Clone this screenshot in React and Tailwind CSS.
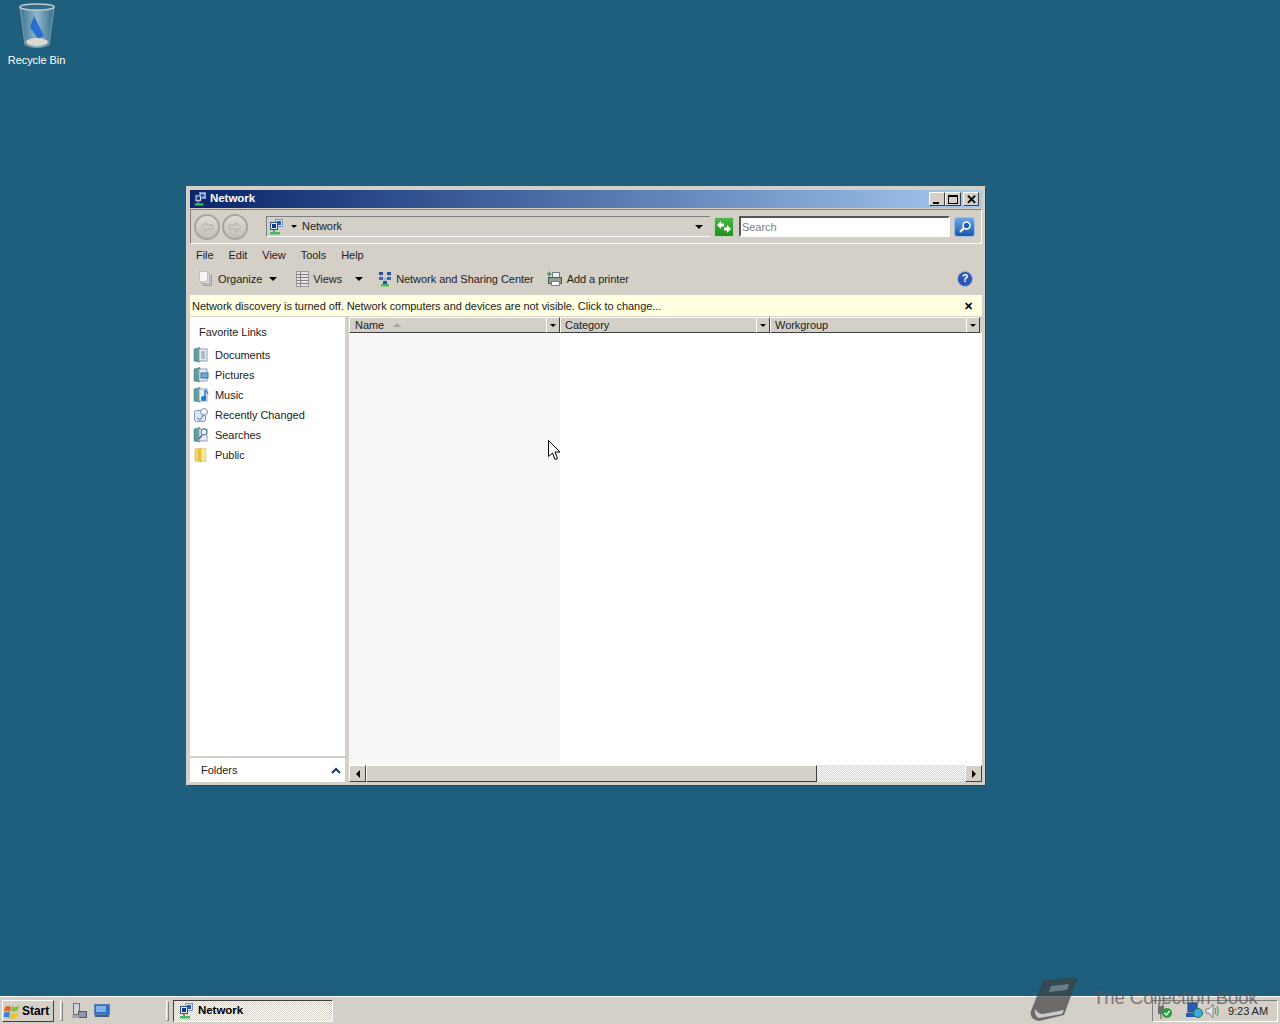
import React from 'react';

const raised = 'border border-t-white border-l-white border-r-[#404040] border-b-[#404040]';

const NetworkIcon = ({ size = 16 }) => (
  <svg width={size} height={size} viewBox="0 0 16 16" className="shrink-0">
    <rect x="7.500" y="0.500" width="7" height="7" fill="#dbe6f5" stroke="#7f95bd" />
    <rect x="9" y="2" width="4" height="4" fill="#2a5bb8" />
    <rect x="2.500" y="3.500" width="7" height="7" fill="#e8eef8" stroke="#34518a" />
    <rect x="4" y="5" width="4" height="4" fill="#123a94" />
    <rect x="5" y="11" width="2" height="2" fill="#6f8fb8" />
    <rect x="2" y="13" width="10" height="2.500" fill="#3fbf55" />
  </svg>
);

const SharingIcon = () => (
  <svg width="16" height="16" viewBox="0 0 16 16" className="shrink-0">
    <rect x="2" y="1" width="4" height="3" fill="#2a4fb0" />
    <rect x="10" y="1" width="4" height="3" fill="#2a4fb0" />
    <rect x="2" y="6" width="4" height="3" fill="#3568c4" />
    <rect x="10" y="6" width="4" height="3" fill="#3568c4" />
    <path d="M4 4v2M12 4v2M6 7.500h4M8 8v3" stroke="#9aa8b8" />
    <rect x="6" y="10" width="4" height="3" fill="#2a4fb0" />
    <rect x="4" y="13" width="8" height="2.500" fill="#3fbf55" />
  </svg>
);

const PrinterIcon = () => (
  <svg width="16" height="16" viewBox="0 0 16 16" className="shrink-0">
    <rect x="5.500" y="1.500" width="7" height="5" fill="#f2f2ec" stroke="#708090" />
    <rect x="1.500" y="6.500" width="13" height="6" fill="#8fa398" stroke="#46584f" />
    <rect x="4.500" y="10.500" width="8" height="4" fill="#fff" stroke="#708090" />
    <path d="M0 3h4.500M2.200 .800v4.500" stroke="#2fa344" strokeWidth="1.500" />
  </svg>
);

const OrganizeIcon = () => (
  <svg width="16" height="16" viewBox="0 0 16 16" className="shrink-0">
    <rect x="5.500" y="4.500" width="8" height="10" fill="#c2c2c2" stroke="#a0a0a0" />
    <rect x="3.500" y="2.500" width="8" height="10" fill="#dedede" stroke="#b0b0b0" />
    <rect x="1.500" y="0.500" width="8" height="10" fill="#f4f4f4" stroke="#c0c0c0" />
  </svg>
);

const ViewsIcon = () => (
  <svg width="16" height="16" viewBox="0 0 16 16" className="shrink-0">
    <rect x="1.500" y="0.500" width="12" height="15" fill="#e4e4e0" stroke="#9a9a9a" />
    <path d="M5.500 1v14M1.500 3.500h12M1.500 6.500h12M1.500 9.500h12M1.500 12.500h12" stroke="#808080" />
  </svg>
);

const FolderBase = ({ children }) => (
  <svg width="16" height="16" viewBox="0 0 16 16" className="shrink-0">
    <path d="M1 2l6-1.500V15l-6-1z" fill="#5f9c9c" stroke="#3f6f80" strokeWidth="0.500" />
    <rect x="6" y="2" width="8" height="12" fill="#e4ecf2" stroke="#8fa3b5" />
    {children}
  </svg>
);

const LinkIcon = ({ type }) => {
  if (type === 'documents')
    return (
      <FolderBase>
        <path d="M8 5h4M8 7h4M8 9h4M8 11h4" stroke="#7a8a9a" />
      </FolderBase>
    );
  if (type === 'pictures')
    return (
      <FolderBase>
        <rect x="8" y="6" width="7" height="5" fill="#6fa8dc" stroke="#3d6d9c" />
      </FolderBase>
    );
  if (type === 'music')
    return (
      <FolderBase>
        <path d="M12 3v8" stroke="#1c78c8" strokeWidth="1.500" />
        <circle cx="10.500" cy="11.500" r="2.500" fill="#1c78c8" />
        <path d="M12 3q3 1 3 4" stroke="#1c78c8" fill="none" />
      </FolderBase>
    );
  if (type === 'recent')
    return (
      <svg width="16" height="16" viewBox="0 0 16 16" className="shrink-0">
        <rect x="1.500" y="3.500" width="11" height="11" rx="2" fill="#dbe6f4" stroke="#7d97bd" />
        <circle cx="11" cy="5" r="3.500" fill="#eef4fb" stroke="#7d97bd" />
        <path d="M4 11l3 2 4-6" stroke="#6c8fbe" fill="none" strokeWidth="1.200" />
      </svg>
    );
  if (type === 'searches')
    return (
      <FolderBase>
        <circle cx="11" cy="5" r="3" fill="#eaf3fb" stroke="#4c6f92" />
        <path d="M9 8l-3 4" stroke="#4c6f92" strokeWidth="1.500" />
      </FolderBase>
    );
  return (
    <svg width="16" height="16" viewBox="0 0 16 16" className="shrink-0">
      <path d="M2 2l6-1v14l-6-1z" fill="#f3d565" stroke="#c9a338" strokeWidth="0.500" />
      <path d="M8 1.500h5v13H8z" fill="#f8e9a0" stroke="#cfae4a" strokeWidth="0.500" />
      <path d="M5 3l3-1v12l-3-1z" fill="#e6bd3c" />
    </svg>
  );
};

const Caret = ({ className = '' }) => (
  <span className={`inline-block w-0 h-0 border-x-[4px] border-x-transparent border-t-[4px] border-t-black ${className}`} />
);

const SmallCaret = ({ className = '' }) => (
  <span className={`inline-block w-0 h-0 border-x-[3px] border-x-transparent border-t-[3px] border-t-black ${className}`} />
);

const links = [
  ['Documents', 'documents'],
  ['Pictures', 'pictures'],
  ['Music', 'music'],
  ['Recently Changed', 'recent'],
  ['Searches', 'searches'],
  ['Public', 'public'],
];

const NavButton = ({ dir }) => (
  <div className="w-[26px] h-[26px] rounded-full border-2 border-[#a8a59e] bg-gradient-to-b from-[#e0ddd6] to-[#c2bfb8] flex items-center justify-center">
    <svg width="14" height="12" viewBox="0 0 14 12">
      <path d={dir === 'left' ? 'M1 6l5-5v3h7v4H6v3z' : 'M13 6L8 1v3H1v4h7v3z'} fill="#cfccc5" stroke="#b4b1a9" />
    </svg>
  </div>
);

const CaptionButton = ({ children }) => (
  <div className={`w-[16px] h-[14px] bg-[#d4d0c8] ${raised} flex items-center justify-center`}>{children}</div>
);

const Column = ({ label, sort, width }) => (
  <div className={`flex h-full ${width}`}>
    <div className={`flex-1 flex items-center pl-[5px] ${raised} border-r-0`}>
      <span className={sort ? '' : '-ml-px'}>{label}</span>
      {sort && (
        <span className="ml-[9px] w-0 h-0 border-x-[4px] border-x-transparent border-b-[4px] border-b-[#a8a59e]" />
      )}
    </div>
    <div className={`w-[14px] flex items-center justify-center ${raised}`}>
      <SmallCaret />
    </div>
  </div>
);

export default function App() {
  return (
    <div
      className="relative w-[1280px] h-[1024px] overflow-hidden bg-[#1e5f7d] flex flex-col text-[11px] tracking-[-0.05px] text-[#222]"
      style={{ fontFamily: '"Liberation Sans", Arial, sans-serif' }}
    >
      <div className="relative flex-1">
        {/* recycle bin */}
        <div className="absolute left-0 top-0 w-[73px] flex flex-col items-center text-white">
          <svg width="40" height="48" viewBox="0 0 40 48" className="mt-[2px]">
            <defs>
              <linearGradient id="bin" x1="0" x2="1">
                <stop offset="0" stopColor="#3f7590" />
                <stop offset="0.5" stopColor="#8fb6ca" />
                <stop offset="1" stopColor="#36708c" />
              </linearGradient>
            </defs>
            <path d="M3 5l5 38q12 5 24 0l5-38z" fill="url(#bin)" stroke="#7e9fb0" />
            <ellipse cx="20" cy="5" rx="17" ry="3" fill="#2f6a88" stroke="#c0c8cc" strokeWidth="1.500" />
            <path d="M17 14l10 20-6 3-8-12z" fill="#2a6fd0" />
            <ellipse cx="20" cy="40" rx="11" ry="4" fill="#ddd8d0" />
          </svg>
          <span className="mt-[3px] leading-[14px]">Recycle Bin</span>
        </div>

        {/* window */}
        <div className="absolute left-[186px] top-[186px] w-[800px] h-[600px] bg-[#d4d0c8] border border-t-[#d4d0c8] border-l-[#d4d0c8] border-r-[#404040] border-b-[#404040] p-[3px] flex flex-col">
          <div className="h-[18px] shrink-0 flex items-center px-[3px] bg-gradient-to-r from-[#0a246a] to-[#a6caf0]">
            <NetworkIcon size={14} />
            <span className="ml-[3px] text-white font-bold text-[11.5px]">Network</span>
            <div className="ml-auto flex items-center">
              <CaptionButton>
                <span className="w-[6px] h-[2px] bg-black mt-[7px] -ml-[2px]" />
              </CaptionButton>
              <CaptionButton>
                <span className="w-[10px] h-[9px] border border-black border-t-2" />
              </CaptionButton>
              <div className="ml-[2px]">
                <CaptionButton>
                  <span className="text-[13px] leading-none font-bold text-black">✕</span>
                </CaptionButton>
              </div>
            </div>
          </div>

          {/* address bar */}
          <div className="h-[35px] shrink-0 mt-px border border-[#808080] border-r-white border-b-white flex items-center pl-[3px] pr-[4px]">
            <div className="flex gap-[2px]">
              <NavButton dir="left" />
              <NavButton dir="right" />
            </div>
            <div className="ml-[18px] w-[444px] h-[21px] border-t border-l border-[#808080] border-b border-b-white flex items-center pl-[1px] pr-[7px]">
              <NetworkIcon />
              <SmallCaret className="ml-[7px]" />
              <span className="ml-[5px]">Network</span>
              <Caret className="ml-auto" />
            </div>
            <div className="ml-[4px] w-[20px] h-[20px] rounded-[2px] bg-gradient-to-b from-[#48b848] to-[#1c8f1c] border border-[#b8d8b8] flex items-center justify-center">
              <svg width="16" height="14" viewBox="0 0 16 14">
                <path d="M1 5l4-4v2.500h3v3H5V9zM15 9l-4-4v2.500H8v3h3V13z" fill="#fff" />
              </svg>
            </div>
            <div className="ml-[5px] w-[211px] h-[21px] bg-white border-2 border-[#555] border-r-white border-b-white flex items-center pl-[1px] pt-[2px] text-[#808080]">
              Search
            </div>
            <div className="ml-[4px] w-[21px] h-[20px] rounded-[3px] bg-gradient-to-b from-[#6aa8e8] to-[#1a57b0] border border-[#9cc0e8] flex items-center justify-center">
              <svg width="14" height="14" viewBox="0 0 14 14">
                <circle cx="8.500" cy="5.500" r="3.500" fill="#1f5cb8" stroke="#fff" strokeWidth="1.500" />
                <path d="M6 8l-4 4" stroke="#fff" strokeWidth="2" />
              </svg>
            </div>
          </div>

          {/* menu */}
          <div className="h-[22px] shrink-0 flex items-center pl-[6px] gap-[15px]">
            {['File', 'Edit', 'View', 'Tools', 'Help'].map((m) => (
              <span key={m}>{m}</span>
            ))}
          </div>

          {/* toolbar */}
          <div className="h-[25px] mb-[4px] shrink-0 flex items-center pl-[8px] pr-[9px]">
            <OrganizeIcon />
            <span className="ml-[4px] mt-px">Organize</span>
            <Caret className="ml-[7px]" />
            <span className="ml-[18px]">
              <ViewsIcon />
            </span>
            <span className="ml-[2px] mt-px">Views</span>
            <Caret className="ml-[13px]" />
            <span className="ml-[14px]">
              <SharingIcon />
            </span>
            <span className="ml-[3px] mt-px">Network and Sharing Center</span>
            <span className="ml-[13px]">
              <PrinterIcon />
            </span>
            <span className="ml-[4px] mt-px">Add a printer</span>
            <div className="ml-auto w-[16px] h-[16px] rounded-full bg-[#2f55b0] border border-[#9fb3dd] text-white text-[11px] font-bold flex items-center justify-center">
              ?
            </div>
          </div>

          {/* info bar */}
          <div className="h-[21px] shrink-0 bg-[#ffffe1] flex items-center pl-[2px] pr-[9px] pt-px">
            <span>Network discovery is turned off. Network computers and devices are not visible. Click to change...</span>
            <span className="ml-auto text-[11px] leading-none font-bold text-black">✕</span>
          </div>

          {/* body */}
          <div className="flex-1 min-h-0 flex mt-px">
            <div className="w-[155px] shrink-0 bg-white flex flex-col">
              <div className="pl-[9px] h-[28px] pt-[2px] flex items-center">Favorite Links</div>
              <div className="flex flex-col pl-[3px]">
                {links.map(([label, type]) => (
                  <div key={label} className="h-[20px] flex items-center gap-[6px]">
                    <LinkIcon type={type} />
                    <span>{label}</span>
                  </div>
                ))}
              </div>
              <div className="mt-auto h-[26px] border-t-2 border-[#d4d0c8] flex items-center pl-[11px] pr-[4px]">
                <span>Folders</span>
                <svg width="10" height="7" viewBox="0 0 10 7" className="ml-auto">
                  <path d="M1 6l4-4 4 4" fill="none" stroke="#17376e" strokeWidth="2" />
                </svg>
              </div>
            </div>
            <div className="w-[4px] shrink-0" />
            <div className="flex-1 min-w-0 flex flex-col bg-white">
              <div className="h-[16px] shrink-0 flex bg-[#d4d0c8]">
                <Column label="Name" sort width="w-[211px]" />
                <Column label="Category" width="w-[210px]" />
                <Column label="Workgroup" width="w-[210px]" />
              </div>
              <div className="flex-1 min-h-0">
                <div className="w-[211px] h-full bg-[#f7f7f7]" />
              </div>
              <div className="h-[17px] shrink-0 flex bg-[repeating-conic-gradient(#d4d0c8_0_25%,#fff_0_50%)] bg-[length:2px_2px]">
                <div className={`w-[17px] bg-[#d4d0c8] ${raised} flex items-center justify-center`}>
                  <span className="w-0 h-0 border-y-[4px] border-y-transparent border-r-[4px] border-r-black" />
                </div>
                <div className={`w-[451px] bg-[#d4d0c8] ${raised}`} />
                <div className={`ml-auto w-[17px] bg-[#d4d0c8] ${raised} flex items-center justify-center`}>
                  <span className="w-0 h-0 border-y-[4px] border-y-transparent border-l-[4px] border-l-black" />
                </div>
              </div>
            </div>
          </div>
        </div>

        {/* mouse pointer */}
        <svg width="13" height="21" viewBox="0 0 13 21" className="absolute left-[548px] top-[440px]">
          <path d="M.5.500v16l4-3.500 2.500 6.500 2.500-1-2.500-6.500h5z" fill="#fff" stroke="#000" />
        </svg>
      </div>

      {/* taskbar */}
      <div className="h-[28px] shrink-0 bg-[#d4d0c8] border-t border-white flex items-center pl-[2px] pr-[2px]">
        <div className={`w-[52px] h-[22px] ${raised} flex items-center pl-[1px] pt-px font-bold text-[12px] text-black`}>
          <svg width="17" height="17" viewBox="0 0 17 17" className="shrink-0">
            <path d="M1 4q3-2 6 0l-1 5q-3-2-6 0z" fill="#e8632a" />
            <path d="M8 3q3 2 7-.5l-1 5q-4 2-7 .5z" fill="#8abf3a" />
            <path d="M0 10q3-2 6 0l-1 5q-3-2-6 0z" fill="#2f87d8" />
            <path d="M7 10q3 1.500 7-.5l-1 5q-4 2-7 .5z" fill="#f2c21f" />
          </svg>
          <span className="ml-[1px]">Start</span>
        </div>
        <div className="ml-[6px] w-[3px] h-[20px] border border-[#808080] border-l-white border-t-white" />
        <svg width="16" height="16" viewBox="0 0 16 16" className="ml-[8px] shrink-0">
          <rect x="2.500" y="0.500" width="6" height="11" fill="#d0d4d8" stroke="#6a7078" />
          <rect x="7.500" y="8.500" width="8" height="6" fill="#8a9aa8" stroke="#556" />
          <rect x="1" y="12" width="7" height="3" fill="#a0a8b0" />
        </svg>
        <svg width="16" height="14" viewBox="0 0 16 14" className="ml-[7px] shrink-0">
          <rect x="0.500" y="0.500" width="15" height="10" fill="#2f6fd0" stroke="#5a7fb0" />
          <rect x="2" y="2" width="10" height="6" fill="#7fb0ea" />
          <rect x="1" y="11" width="14" height="2" fill="#4a5a78" />
        </svg>
        <div className="ml-[56px] w-[3px] h-[20px] border border-[#808080] border-l-white border-t-white" />
        <div className="ml-[4px] w-[160px] h-[22px] border border-t-[#404040] border-l-[#404040] border-r-white border-b-white bg-[repeating-conic-gradient(#d4d0c8_0_25%,#fff_0_50%)] bg-[length:2px_2px] flex items-center pl-[4px] pt-px font-bold text-black text-[11.5px]">
          <NetworkIcon />
          <span className="ml-[4px]">Network</span>
        </div>
        <div className="ml-auto w-[126px] h-[22px] border border-[#808080] border-r-white border-b-white flex items-center pl-[3px] pr-[9px]">
          <svg width="18" height="16" viewBox="0 0 18 16" className="shrink-0">
            <rect x="2" y="3" width="6" height="8" fill="#707070" />
            <path d="M3 0v3M7 0v3M5 11v5" stroke="#555" />
            <circle cx="11" cy="10" r="5" fill="#2b9e3f" />
            <path d="M8.500 10l2 2 3-4" stroke="#fff" fill="none" strokeWidth="1.300" />
          </svg>
          <svg width="18" height="18" viewBox="0 0 18 18" className="ml-[12px] shrink-0">
            <rect x="2" y="1" width="9" height="9" fill="#2a5bb8" stroke="#1a3a80" />
            <rect x="0" y="11" width="12" height="4" fill="#2a5bb8" />
            <circle cx="12" cy="11" r="4.500" fill="#3fa9dc" stroke="#1f7f3f" />
          </svg>
          <svg width="16" height="16" viewBox="0 0 16 16" className="ml-px shrink-0">
            <path d="M1 6h3l4-5v14l-4-5H1z" fill="#e8e8e8" stroke="#808080" />
            <path d="M10 5q2 3 0 6M12 3q3 5 0 10" stroke="#2f9e44" fill="none" />
          </svg>
          <span className="ml-auto mt-px">9:23 AM</span>
        </div>
      </div>

      {/* watermark */}
      <div className="absolute left-[1029px] top-[976px] flex items-start opacity-70 pointer-events-none">
        <svg width="52" height="47" viewBox="0 0 52 47" className="shrink-0">
          <path d="M14 4l35-3-14 38-25 6q-10-2-8-10z" fill="#404040" />
          <path d="M6 33q3 5 8 5l21-4-2 4-23 4q-5-2-4-9z" fill="#c8c8c8" />
          <path d="M22 10l18-2-2 6-18 2z" fill="#8a8a8a" />
        </svg>
        <span className="ml-[12px] mt-[13px] text-[18.5px] leading-[18px] text-[#555]">The Collection Book</span>
      </div>
    </div>
  );
}
